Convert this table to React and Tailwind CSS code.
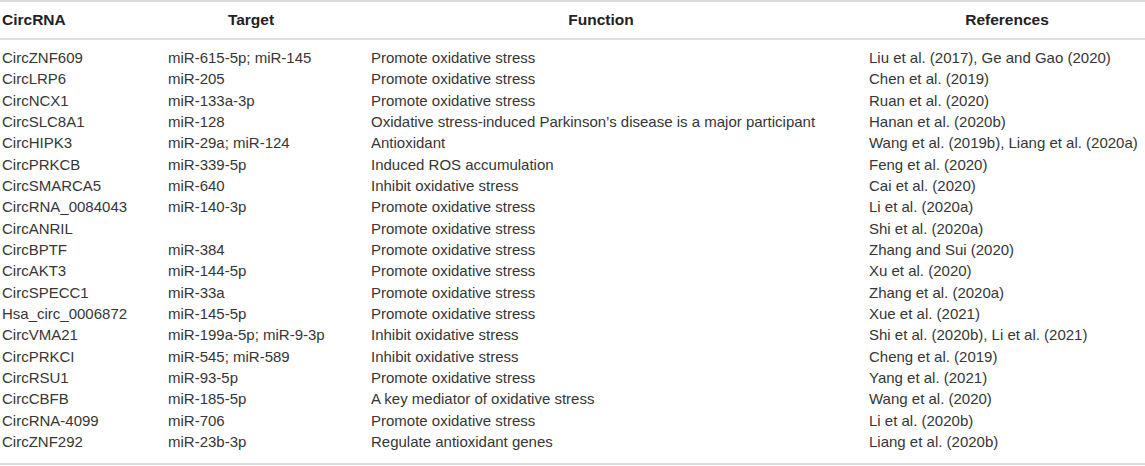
const ROWS = [
  ["CircZNF609", "miR-615-5p; miR-145", "Promote oxidative stress", "Liu et al. (2017), Ge and Gao (2020)"],
  ["CircLRP6", "miR-205", "Promote oxidative stress", "Chen et al. (2019)"],
  ["CircNCX1", "miR-133a-3p", "Promote oxidative stress", "Ruan et al. (2020)"],
  ["CircSLC8A1", "miR-128", "Oxidative stress-induced Parkinson’s disease is a major participant", "Hanan et al. (2020b)"],
  ["CircHIPK3", "miR-29a; miR-124", "Antioxidant", "Wang et al. (2019b), Liang et al. (2020a)"],
  ["CircPRKCB", "miR-339-5p", "Induced ROS accumulation", "Feng et al. (2020)"],
  ["CircSMARCA5", "miR-640", "Inhibit oxidative stress", "Cai et al. (2020)"],
  ["CircRNA_0084043", "miR-140-3p", "Promote oxidative stress", "Li et al. (2020a)"],
  ["CircANRIL", "", "Promote oxidative stress", "Shi et al. (2020a)"],
  ["CircBPTF", "miR-384", "Promote oxidative stress", "Zhang and Sui (2020)"],
  ["CircAKT3", "miR-144-5p", "Promote oxidative stress", "Xu et al. (2020)"],
  ["CircSPECC1", "miR-33a", "Promote oxidative stress", "Zhang et al. (2020a)"],
  ["Hsa_circ_0006872", "miR-145-5p", "Promote oxidative stress", "Xue et al. (2021)"],
  ["CircVMA21", "miR-199a-5p; miR-9-3p", "Inhibit oxidative stress", "Shi et al. (2020b), Li et al. (2021)"],
  ["CircPRKCI", "miR-545; miR-589", "Inhibit oxidative stress", "Cheng et al. (2019)"],
  ["CircRSU1", "miR-93-5p", "Promote oxidative stress", "Yang et al. (2021)"],
  ["CircCBFB", "miR-185-5p", "A key mediator of oxidative stress", "Wang et al. (2020)"],
  ["CircRNA-4099", "miR-706", "Promote oxidative stress", "Li et al. (2020b)"],
  ["CircZNF292", "miR-23b-3p", "Regulate antioxidant genes", "Liang et al. (2020b)"],
];

const COLS = "grid grid-cols-[168px_203px_498px_276px]";

export default function App() {
  return (
    <div className="w-[1145px] h-[466px] bg-white text-[#363636] font-['Liberation_Sans',Arial,sans-serif] text-[15px] overflow-hidden">
      <div className="border-t-2 border-b-2 border-[#dcdcdc]">
        {/* Header */}
        <div className={`${COLS} h-[38px] items-center font-bold text-[15.5px] text-[#222] border-b-2 border-[#e0e0e0]`}>
          <div className="pl-[2px]">CircRNA</div>
          <div className="pr-[37px] text-center">Target</div>
          <div className="pr-[38px] text-center">Function</div>
          <div className="text-center">References</div>
        </div>

        {/* Body */}
        <div className="pt-[7px] pb-[11px]">
          {ROWS.map((r, i) => (
            <div key={i} className={`${COLS} h-[21.33px] items-center whitespace-nowrap`}>
              <div className="pl-[2px]">{r[0]}</div>
              <div>{r[1]}</div>
              <div>{r[2]}</div>
              <div>{r[3]}</div>
            </div>
          ))}
        </div>
      </div>
    </div>
  );
}
